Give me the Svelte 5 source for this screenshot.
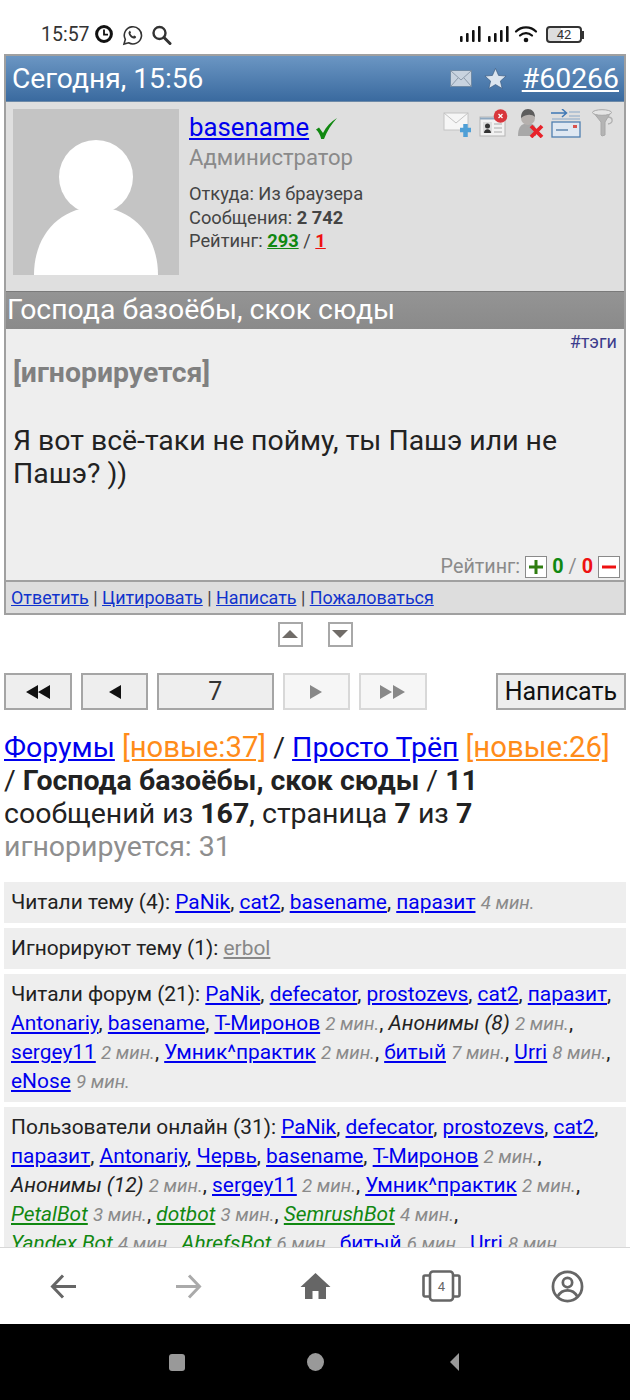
<script>
  const rows1 = ['PaNik','cat2','basename','паразит'];
</script>

<div class="screen">
  <div class="status">
    <span class="clock">15:57</span>
    <svg class="ic" style="left:95px" width="18" height="18" viewBox="0 0 18 18"><circle cx="9" cy="9" r="7.4" fill="none" stroke="#111" stroke-width="3"/><path d="M9 4.5V9.6H13" fill="none" stroke="#111" stroke-width="1.8"/></svg>
    <svg class="ic" style="left:122px" width="21" height="21" viewBox="0 0 21 21"><path d="M2 19l1.3-4.6A8.6 8.6 0 1 1 6.6 17.8z" fill="none" stroke="#333" stroke-width="1.6"/><path d="M7.3 6.2c-1.4 1.2-.8 3.3.9 5.2 1.8 1.9 4 2.8 5.4 1.6.6-.6.6-1.2.3-1.5l-1.6-.9c-.4-.1-.7.5-1.1.8-.9-.1-2.6-1.8-2.9-2.8.3-.4.8-.7.7-1.1l-.8-1.6c-.2-.2-.6-.1-.9.3z" fill="#333"/></svg>
    <svg class="ic" style="left:151px" width="21" height="21" viewBox="0 0 21 21"><circle cx="8.5" cy="8" r="6" fill="none" stroke="#333" stroke-width="2.4"/><path d="M13 12.500l6 6" stroke="#333" stroke-width="3" stroke-linecap="round"/></svg>
    <svg class="ic" style="left:459px" width="52" height="18" viewBox="0 0 52 18"><g fill="#111"><rect x="1" y="11" width="2.6" height="6" rx="1"/><rect x="7" y="8" width="2.600" height="9" rx="1"/><rect x="13" y="5" width="2.600" height="12" rx="1"/><rect x="19" y="1" width="2.600" height="16" rx="1"/><rect x="29" y="11" width="2.600" height="6" rx="1"/><rect x="35" y="8" width="2.600" height="9" rx="1"/><rect x="41" y="5" width="2.600" height="12" rx="1"/><rect x="47" y="1" width="2.600" height="16" rx="1"/></g></svg>
    <svg class="ic" style="left:514px" width="24" height="18" viewBox="0 0 24 18"><g fill="none" stroke="#111" stroke-width="2.200" stroke-linecap="round"><path d="M2 6.500c5.500-5.500 14.500-5.500 20 0"/><path d="M6 10.500c3.500-3.300 8.500-3.300 12 0"/></g><circle cx="12" cy="15" r="2.300" fill="#111"/></svg>
    <div class="batt"><span>42</span></div>
  </div>

  <main class="page">
    <article class="post">
      <header class="phead">
        <span class="date">Сегодня, 15:56</span>
        <svg class="mail" width="22" height="17" viewBox="0 0 22 17"><rect x=".5" y=".5" width="21" height="16" fill="#c9d3df" stroke="#6f8aa6"/><path d="M1 1l10 9L21 1M1 16l7-8M21 16l-7-8" fill="none" stroke="#8d9bab"/></svg>
        <svg class="star" width="23" height="23" viewBox="0 0 24 24"><path d="M12 1.500l3.200 7.300 7.800.7-5.900 5.200 1.800 7.700L12 18.300l-6.900 4.100 1.800-7.700L1 9.500l7.800-.7z" fill="#dbe5f0" stroke="#3d5c80" stroke-width=".7"/></svg>
        <a href="#n" class="num">#60266</a>
      </header>

      <section class="profile">
        <div class="avatar">
          <svg width="166" height="166" viewBox="0 0 166 166"><circle cx="83" cy="68" r="37" fill="#fff"/><path d="M21 166c0-42 28-68 62-68s62 26 62 68z" fill="#fff"/></svg>
        </div>
        <div class="info">
          <div class="nameline"><a href="#u" class="uname">basename</a><svg class="check" width="21" height="21" viewBox="0 0 21 21" aria-label="проверен"><path d="M0 11.500l3-2 4 5.500C10 9 15 3.500 21 0 15.500 6 11 13 8 21H5.200C4.300 17 2.300 13.500 0 11.500z" fill="#118811"/></svg></div>
          <div class="role">Администратор</div>
          <div class="meta">
            <div>Откуда: Из браузера</div>
            <div>Сообщения: <b>2 742</b></div>
            <div>Рейтинг: <a href="#g" class="good">293</a> / <a href="#b" class="bad">1</a></div>
          </div>
        </div>
        <div class="tools">
          <svg width="29" height="29" viewBox="0 0 29 29"><rect x="1" y="4" width="24" height="17" fill="#f6f6f6" stroke="#c4c4c4"/><path d="M1 4l12 10L25 4" fill="none" stroke="#c4c4c4"/><path d="M17 21h11M22.500 15v13" stroke="#4f9fd6" stroke-width="4.500"/></svg>
          <svg width="29" height="29" viewBox="0 0 29 29"><rect x="1" y="8" width="25" height="19" fill="#f2f2f2" stroke="#b5b5b5"/><path d="M1 9.500h17" stroke="#8fa8c0" stroke-width="2"/><rect x="4" y="13" width="9" height="11" fill="#ddd"/><circle cx="8.500" cy="17" r="2.500" fill="#333"/><path d="M5 24c0-5 7-5 7 0z" fill="#333"/><path d="M15 15h8M15 19h8M15 23h8" stroke="#aaa"/><circle cx="21.500" cy="7" r="6.800" fill="#d8363c"/><path d="M19.500 5l4 4M23.500 5l-4 4" stroke="#fff" stroke-width="1.300"/></svg>
          <svg width="29" height="29" viewBox="0 0 29 29"><path d="M3 27c0-7 2-11 6-12h8c3 1 4 3 4 12z" fill="#a8a8a8"/><circle cx="13" cy="9" r="7" fill="#b5b0ad"/><path d="M6 9c0-6 3-9 7-9s7 3 7 8c-3-3-9-3-14 1z" fill="#5d5d5d"/><path d="M16 17l11 11M27 17L16 28" stroke="#e8222a" stroke-width="3.800"/></svg>
          <svg width="30" height="29" viewBox="0 0 30 29"><path d="M0 4h15M11 0l4.500 4-4.500 4" fill="none" stroke="#3f78b5" stroke-width="1.500"/><path d="M18 3h11M18 7h11M1 10h28" stroke="#8aa8c8" stroke-width="1.200"/><rect x="1" y="13" width="28" height="15" fill="#dfe8f2" stroke="#4f7fb0" stroke-width="1.300"/><path d="M5 21h12" stroke="#7f9fc0" stroke-width="2"/><rect x="22" y="16" width="4" height="3" fill="#d9534f"/></svg>
          <svg class="funnel" width="23" height="28" viewBox="0 0 23 28"><path d="M16 8c5 0 6 6 0 7" fill="none" stroke="#b0b0b0" stroke-width="1.300"/><path d="M1 3h18l-6 10v13l-3 1-1-1V13z" fill="#b4b4b4" stroke="#a8a8a8"/><ellipse cx="10" cy="3.500" rx="9.500" ry="2.800" fill="#e4e4e4" stroke="#a8a8a8"/></svg>
        </div>
      </section>

      <h2 class="title">Господа базоёбы, скок сюды</h2>

      <section class="body">
        <div class="tag"><span>#тэги</span></div>
        <div class="ign">[игнорируется]</div>
        <p class="text">Я вот всё-таки не пойму, ты Пашэ или не Пашэ? ))</p>
        <div class="rate">
          Рейтинг:
          <span class="vote"><svg width="16" height="16" viewBox="0 0 16 16"><path d="M8 1v14M1 8h14" stroke="#2f7d10" stroke-width="3"/></svg></span>
          <b class="g">0</b> / <b class="r">0</b>
          <span class="vote"><svg width="16" height="16" viewBox="0 0 16 16"><path d="M1 8h14" stroke="#ee1111" stroke-width="3"/></svg></span>
        </div>
      </section>

      <footer class="pfoot">
        <a href="#a">Ответить</a> | <a href="#b">Цитировать</a> | <a href="#c">Написать</a> | <a href="#d">Пожаловаться</a>
      </footer>
    </article>

    <div class="updown">
      <span class="sq"><i class="tri up"></i></span>
      <span class="sq"><i class="tri down"></i></span>
    </div>

    <nav class="pager">
      <span class="pb w68"><svg width="26" height="14" viewBox="0 0 26 14"><path d="M13 0v14L1 7zM25 0v14L13 7z" fill="#111"/></svg></span>
      <span class="pb w68"><svg width="13" height="14" viewBox="0 0 13 14"><path d="M13 0v14L1 7z" fill="#111"/></svg></span>
      <span class="pb cur">7</span>
      <span class="pb w68 off"><svg width="13" height="14" viewBox="0 0 13 14"><path d="M0 0v14L12 7z" fill="#888"/></svg></span>
      <span class="pb w68 off"><svg width="26" height="14" viewBox="0 0 26 14"><path d="M0 0v14L12 7zM13 0v14L25 7z" fill="#888"/></svg></span>
      <span class="pb write">Написать</span>
    </nav>

    <div class="crumbs">
      <a href="#f">Форумы</a> <a href="#n" class="new">[новые:37]</a> / <a href="#t">Просто Трёп</a> <a href="#n" class="new">[новые:26]</a> / <b>Господа базоёбы, скок сюды</b> / <b>11</b> сообщений из <b>167</b>, страница <b>7</b> из <b>7</b>
      <div class="ignc">игнорируется: 31</div>
    </div>

    <div class="box">Читали тему (4):
      {#each rows1 as r, i}<a href="#u">{r}</a>{i < rows1.length - 1 ? ', ' : ' '}{/each}<em>4 мин.</em></div>
    <div class="box">Игнорируют тему (1): <a href="#u" class="grey">erbol</a></div>
    <div class="box">Читали форум (21): <a href="#u">PaNik</a>, <a href="#u">defecator</a>, <a href="#u">prostozevs</a>, <a href="#u">cat2</a>, <a href="#u">паразит</a>, <a href="#u">Antonariy</a>, <a href="#u">basename</a>, <a href="#u">Т-Миронов</a> <em>2 мин.</em>, <i class="anon">Анонимы (8)</i> <em>2 мин.</em>, <a href="#u">sergey11</a> <em>2 мин.</em>, <a href="#u">Умник^практик</a> <em>2 мин.</em>, <a href="#u">битый</a> <em>7 мин.</em>, <a href="#u">Urri</a> <em>8 мин.</em>, <a href="#u">eNose</a> <em>9 мин.</em></div>
    <div class="box">Пользователи онлайн (31): <a href="#u">PaNik</a>, <a href="#u">defecator</a>, <a href="#u">prostozevs</a>, <a href="#u">cat2</a>, <a href="#u">паразит</a>, <a href="#u">Antonariy</a>, <a href="#u">Червь</a>, <a href="#u">basename</a>, <a href="#u">Т-Миронов</a> <em>2 мин.</em>, <i class="anon">Анонимы (12)</i> <em>2 мин.</em>, <a href="#u">sergey11</a> <em>2 мин.</em>, <a href="#u">Умник^практик</a> <em>2 мин.</em>, <a href="#u" class="bot">PetalBot</a> <em>3 мин.</em>, <a href="#u" class="bot">dotbot</a> <em>3 мин.</em>, <a href="#u" class="bot">SemrushBot</a> <em>4 мин.</em>,<br><a href="#u" class="bot">Yandex Bot</a> <em>4 мин.</em>, <a href="#u" class="bot">AhrefsBot</a> <em>6 мин.</em>, <a href="#u">битый</a> <em>6 мин.</em>, <a href="#u">Urri</a> <em>8 мин.</em></div>
  </main>

  <div class="browser">
    <span class="bi"><svg width="26" height="25" viewBox="0 0 26 25"><path d="M26 12.500H3M13 1.500L2.500 12.500 13 23.500" fill="none" stroke="#666" stroke-width="3"/></svg></span>
    <span class="bi"><svg width="26" height="25" viewBox="0 0 26 25"><path d="M0 12.500h23M13 1.500l10.500 11L13 23.500" fill="none" stroke="#aaa" stroke-width="3"/></svg></span>
    <span class="bi"><svg width="31" height="28" viewBox="0 0 30 28"><path d="M15 1L0 15h4.500v12h7.500v-8h6v8h7.500V15H30z" fill="#666"/></svg></span>
    <span class="bi"><svg width="39" height="32" viewBox="0 0 39 32"><rect x="8" y="1.500" width="23" height="29" rx="3" fill="none" stroke="#666" stroke-width="2.600"/><path d="M8 5.500H3a1.500 1.500 0 0 0-1.500 1.500v18A1.500 1.500 0 0 0 3 26.500h5M31 5.500h5A1.500 1.500 0 0 1 37.500 7v18a1.500 1.500 0 0 1-1.500 1.500h-5" fill="none" stroke="#666" stroke-width="2.600"/><text x="19.500" y="21" text-anchor="middle" font-family="Roboto" font-size="13" fill="#666">4</text></svg></span>
    <span class="bi"><svg width="33" height="33" viewBox="0 0 34 34"><circle cx="17" cy="17" r="15" fill="none" stroke="#666" stroke-width="2.800"/><circle cx="17" cy="13" r="4.800" fill="none" stroke="#666" stroke-width="2.800"/><path d="M7 27c3-5 6.500-6 10-6s7 1 10 6" fill="none" stroke="#666" stroke-width="2.800"/></svg></span>
  </div>
  <div class="sys">
    <span class="s-sq"></span>
    <span class="s-ci"></span>
    <svg class="s-tr" width="10" height="18" viewBox="0 0 10 18"><path d="M10 0v18L1 9z" fill="#999"/></svg>
  </div>
</div>

<style>
  :global(body) { margin: 0; background: #fff; }
  .screen {
    width: 630px; height: 1400px; display: flex; flex-direction: column; overflow: hidden;
    font-family: Roboto, "Noto Sans", sans-serif; color: #111; background: #fff;
  }
  a { color: #0000ee; }

  .status { height: 54px; flex: none; position: relative; }
  .clock { position: absolute; left: 41px; top: 24px; font-size: 19.500px; line-height: 22px; color: #333; }
  .ic { position: absolute; top: 25px; }
  .batt {
    position: absolute; left: 546px; top: 26px; width: 32px; height: 13px; border: 2px solid #333; border-radius: 4px;
    font-size: 13px; line-height: 13px; text-align: center; color: #333; background: linear-gradient(90deg, #ddd 42%, #fff 42%);
  }
  .batt::after { content: ""; position: absolute; left: 34px; top: 2.500px; width: 2px; height: 8px; background: #333; }

  .page { flex: 1; min-height: 0; overflow: hidden; padding: 0 4px; }

  .post { border: 2px solid #a0a0a0; background: #ddd; }
  .phead {
    height: 45px; display: flex; align-items: center; padding: 0 5px 0 6px; color: #fff;
    background: linear-gradient(#6b96c3, #3a6a9f); border-bottom: 1px solid #6d8aa8;
  }
  .date { font-size: 28.200px; margin-right: auto; }
  .mail { margin-right: 12px; }
  .star { margin-right: 15px; }
  .num { color: #fff; font-size: 28.400px; }

  .profile { height: 189px; display: flex; position: relative; padding: 7px; box-sizing: border-box; background: #dfdfdf; }
  .avatar { width: 166px; height: 166px; background: #c4c4c4; flex: none; }
  .avatar svg { display: block; }
  .info { margin-left: 10px; }
  .nameline { font-size: 25.800px; line-height: 32px; margin-top: 2px; }
  .uname { color: #0000ee; }
  .check { margin-left: 7px; vertical-align: -3px; }
  .role { font-size: 22.100px; line-height: 28px; color: #8a8a8a; }
  .meta { margin-top: 11px; font-size: 18.300px; line-height: 23.500px; color: #444; }
  .good { color: #118811; font-weight: 700; }
  .bad { color: #ee1111; font-weight: 700; }
  .tools { position: absolute; right: 9px; top: 7px; display: flex; gap: 7px; align-items: flex-start; }
  .funnel { margin-left: 4px; }

  .title {
    margin: 0; height: 38px; line-height: 36px; padding-left: 1px; font-weight: 400; font-size: 28.400px; color: #fff; white-space: nowrap;
    background: linear-gradient(#949494, #8a8a8a); border-top: 1px solid #7a7a7a; box-sizing: border-box;
  }

  .body { height: 253px; box-sizing: border-box; background: #eee; padding: 3px 7px 0 7px; position: relative; border-bottom: 2px solid #a0a0a0; }
  .tag { text-align: right; font-size: 18px; line-height: 20px; color: #3c3c8c; }
  .ign { font-size: 28.400px; font-weight: 700; color: #808080; line-height: 36px; margin-top: 3px; }
  .text { font-size: 28.400px; line-height: 33px; margin: 33px 0 0; color: #222; }
  .rate { position: absolute; right: 4px; bottom: 1px; font-size: 19.750px; line-height: 24px; color: #8a8a8a; display: flex; align-items: center; gap: 5px; }
  .g { color: #118811; } .r { color: #ee1111; }
  .vote { width: 22px; height: 22px; box-sizing: border-box; border: 1px solid #8a8a8a; background: #fff; display: flex; align-items: center; justify-content: center; }

  .pfoot { height: 31px; box-sizing: border-box; line-height: 32px; padding-left: 5px; font-size: 17.900px; background: #ddd; color: #444; white-space: nowrap; }
  .pfoot a { color: #1133cc; }

  .updown { height: 38px; display: flex; justify-content: center; gap: 25px; align-items: center; }
  .sq { width: 25px; height: 25px; box-sizing: border-box; border: 2px solid #a8a8a8; background: #fff; display: flex; align-items: center; justify-content: center; }
  .tri { width: 0; height: 0; border-left: 8px solid transparent; border-right: 8px solid transparent; }
  .up { border-bottom: 8px solid #706c68; }
  .down { border-top: 8px solid #706c68; }

  .pager { display: flex; margin-top: 20px; gap: 9px; height: 37px; }
  .pb { box-sizing: border-box; height: 37px; border: 2px solid #a5a5a5; background: #eee; display: flex; align-items: center; justify-content: center; font-size: 25px; color: #333; }
  .w68 { width: 68px; }
  .cur { width: 117px; }
  .off { background: #f6f6f6; border-color: #d8d8d8; }
  .write { margin-left: 60px; width: 131px; color: #111; }

  .crumbs { margin-top: 21px; font-size: 28.500px; line-height: 33px; color: #222; }
  .crumbs .new { color: #ff8c1a; font-size: 29.300px; line-height: 1; }
  .ignc { color: #8e8e8e; line-height: 34px; }

  .box { background: #eee; margin-top: 5px; padding: 6px 7px 6px 7px; font-size: 20.900px; line-height: 29px; color: #222; }
  .crumbs + .box { margin-top: 18px; }
  .box em { color: #8a8a8a; font-size: 18.700px; line-height: 1; }
  .grey { color: #888; }
  .bot { color: #118811; font-style: italic; }
  .anon { color: #222; }

  .browser { height: 77px; flex: none; display: flex; border-top: 1px solid #d8d8d8; box-sizing: border-box; background: #fff; }
  .bi { flex: 1; display: flex; align-items: center; justify-content: center; }
  .sys { height: 76px; flex: none; background: #000; display: flex; align-items: center; padding-left: 169px; }
  .s-sq { width: 16px; height: 17px; border-radius: 3px; background: #999; }
  .s-ci { width: 17px; height: 18px; border-radius: 50%; background: #999; margin-left: 122px; }
  .s-tr { margin-left: 125px; }
</style>
